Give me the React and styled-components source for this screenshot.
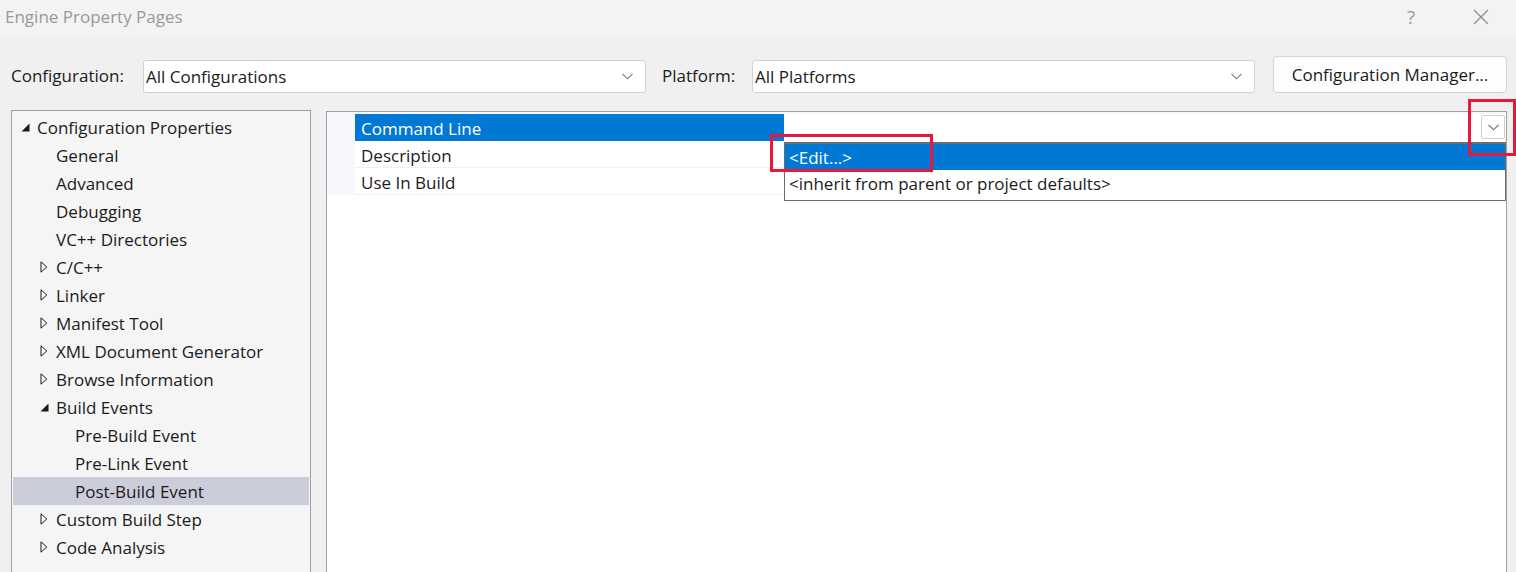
import React from 'react';
import styled, { createGlobalStyle } from 'styled-components';

const Global = createGlobalStyle`
  html, body { margin: 0; padding: 0; }
  body {
    width: 1516px;
    height: 572px;
    overflow: hidden;
    background: #f0f0f0;
    font-family: "Segoe UI", "Open Sans", "Noto Sans", sans-serif;
    font-size: 17px;
    color: #1b1b1b;
  }
`;

const Dialog = styled.div`
  position: relative;
  width: 1516px;
  height: 572px;
  display: flex;
  flex-direction: column;
`;

const TitleBar = styled.div`
  height: 38px;
  display: flex;
  align-items: center;
  background: #f3f3f3;
  padding-left: 5px;
  padding-bottom: 5px;
  box-sizing: border-box;
`;

const Title = styled.div`
  flex: 1;
  color: #999;
  font-size: 17px;
`;

const TitleButton = styled.div`
  width: 70px;
  display: flex;
  justify-content: center;
  color: #9a9a9a;
  font-size: 19px;
`;

const Toolbar = styled.div`
  display: flex;
  align-items: center;
  height: 37px;
  margin-top: 18px;
  padding-left: 11px;
`;

const Label = styled.span`
  width: ${p => p.w}px;
  flex-shrink: 0;
  padding-top: 2px;
`;

const Select = styled.div`
  width: ${p => p.w}px;
  height: 33px;
  margin-top: 3px;
  box-sizing: border-box;
  background: #fff;
  border: 1px solid #d2d2d2;
  border-radius: 3px;
  display: flex;
  align-items: center;
  padding: 0 12px 0 2px;
  margin-right: ${p => p.mr}px;
  span { flex: 1; }
`;

const Button = styled.div`
  width: 234px;
  height: 37px;
  box-sizing: border-box;
  background: #fdfdfd;
  border: 1px solid #d4d4d4;
  border-radius: 4px;
  display: flex;
  align-items: center;
  justify-content: center;
`;

const Main = styled.div`
  flex: 1;
  display: flex;
  gap: 15px;
  padding: 17px 9px 0 11px;
  min-height: 0;
`;

const Tree = styled.div`
  width: 300px;
  flex-shrink: 0;
  box-sizing: border-box;
  border: 1px solid #a0a0a0;
  border-bottom: none;
  background: #f5f5f5;
  padding: 2px 1px 0;
`;

const TreeRow = styled.div`
  height: 28px;
  display: flex;
  align-items: center;
  padding-left: ${p => 5 + p.level * 19}px;
  background: ${p => (p.selected ? '#cbcdda' : 'transparent')};
`;

const Glyph = styled.span`
  width: 19px;
  flex-shrink: 0;
  display: flex;
  align-items: center;
  padding-left: ${p => (p.open ? 3 : 3)}px;
  box-sizing: border-box;
`;

const Grid = styled.div`
  position: relative;
  flex: 1;
  margin-top: 1px;
  box-sizing: border-box;
  border: 1px solid #a0a0a0;
  border-bottom: none;
  background: #fff;
`;

const PropTable = styled.div`
  padding-top: 2px;
  background: #f6f8fb;
  padding-left: 28px;
`;

const PropRow = styled.div`
  display: flex;
  height: 27px;
  box-sizing: border-box;
`;

const PropName = styled.div`
  width: 429px;
  flex-shrink: 0;
  display: flex;
  align-items: center;
  padding: 2px 0 0 6px;
  box-sizing: border-box;
  background: ${p => (p.active ? '#0078d4' : '#fff')};
  color: ${p => (p.active ? '#fff' : '#1b1b1b')};
  border-bottom: 1px solid ${p => (p.active ? '#0078d4' : '#eef0f4')};
`;

const PropValue = styled.div`
  flex: 1;
  display: flex;
  align-items: center;
  justify-content: flex-end;
  background: #fff;
  border-bottom: 1px solid ${p => (p.active ? '#fff' : '#eef0f4')};
  padding-right: 1px;
`;

const DropButton = styled.div`
  width: 24px;
  height: 24px;
  box-sizing: border-box;
  border: 1px solid #d0d0d0;
  border-radius: 2px;
  background: #fff;
  display: flex;
  align-items: center;
  justify-content: center;
`;

const DropList = styled.div`
  position: absolute;
  left: 457px;
  top: 30px;
  right: 0;
  box-sizing: border-box;
  border: 1px solid #6b6b6b;
  background: #fff;
  padding-bottom: 3px;
`;

const DropItem = styled.div`
  height: 27px;
  box-sizing: border-box;
  display: flex;
  align-items: center;
  padding-left: 4px;
  background: ${p => (p.active ? '#0078d4' : '#fff')};
  color: ${p => (p.active ? '#fff' : '#1b1b1b')};
  border-top: ${p => (p.active ? '1px dotted #c07020' : 'none')};
`;

const Callout = styled.div`
  position: absolute;
  box-sizing: border-box;
  border: 3px solid #e8173c;
  left: ${p => p.x}px;
  top: ${p => p.y}px;
  width: ${p => p.w}px;
  height: ${p => p.h}px;
  pointer-events: none;
`;

const Chevron = ({ color = '#7a7a7a' }) => (
  <svg width="11" height="7" viewBox="0 0 11 7">
    <path d="M0.5 0.8 L5.5 5.8 L10.5 0.8" fill="none" stroke={color} strokeWidth="1.1" />
  </svg>
);

const Expanded = () => (
  <svg width="9" height="9" viewBox="0 0 9 9">
    <path d="M8.5 0.5 L8.5 8.5 L0.5 8.5 Z" fill="#1b1b1b" />
  </svg>
);

const Collapsed = () => (
  <svg width="8" height="12" viewBox="0 0 8 12">
    <path d="M1 0.8 L6.8 6 L1 11.2 Z" fill="none" stroke="#1b1b1b" strokeWidth="1" />
  </svg>
);

const tree = [
  { level: 0, label: 'Configuration Properties', state: 'open' },
  { level: 1, label: 'General' },
  { level: 1, label: 'Advanced' },
  { level: 1, label: 'Debugging' },
  { level: 1, label: 'VC++ Directories' },
  { level: 1, label: 'C/C++', state: 'closed' },
  { level: 1, label: 'Linker', state: 'closed' },
  { level: 1, label: 'Manifest Tool', state: 'closed' },
  { level: 1, label: 'XML Document Generator', state: 'closed' },
  { level: 1, label: 'Browse Information', state: 'closed' },
  { level: 1, label: 'Build Events', state: 'open' },
  { level: 2, label: 'Pre-Build Event' },
  { level: 2, label: 'Pre-Link Event' },
  { level: 2, label: 'Post-Build Event', selected: true },
  { level: 1, label: 'Custom Build Step', state: 'closed' },
  { level: 1, label: 'Code Analysis', state: 'closed' },
];

export default function App() {
  return (
    <>
      <Global />
      <Dialog>
        <TitleBar>
          <Title>Engine Property Pages</Title>
          <TitleButton>?</TitleButton>
          <TitleButton>
            <svg width="16" height="16" viewBox="0 0 16 16">
              <path d="M1 1 L15 15 M15 1 L1 15" stroke="#8a8a8a" strokeWidth="1.2" />
            </svg>
          </TitleButton>
        </TitleBar>

        <Toolbar>
          <Label w={132}>Configuration:</Label>
          <Select w={503} mr={16}>
            <span>All Configurations</span>
            <Chevron />
          </Select>
          <Label w={90}>Platform:</Label>
          <Select w={503} mr={18}>
            <span>All Platforms</span>
            <Chevron />
          </Select>
          <Button>Configuration Manager...</Button>
        </Toolbar>

        <Main>
          <Tree>
            {tree.map(item => (
              <TreeRow key={item.label} level={item.level} selected={item.selected}>
                <Glyph open={item.state === 'open'}>
                  {item.state === 'open' && <Expanded />}
                  {item.state === 'closed' && <Collapsed />}
                </Glyph>
                <span>{item.label}</span>
              </TreeRow>
            ))}
          </Tree>

          <Grid>
            <PropTable>
              <PropRow>
                <PropName active>Command Line</PropName>
                <PropValue active>
                  <DropButton>
                    <Chevron color="#6a6a6a" />
                  </DropButton>
                </PropValue>
              </PropRow>
              <PropRow>
                <PropName>Description</PropName>
                <PropValue />
              </PropRow>
              <PropRow>
                <PropName>Use In Build</PropName>
                <PropValue />
              </PropRow>
            </PropTable>
            <DropList>
              <DropItem active>&lt;Edit...&gt;</DropItem>
              <DropItem>&lt;inherit from parent or project defaults&gt;</DropItem>
            </DropList>
          </Grid>
        </Main>

        <Callout x={770} y={134} w={163} h={38} />
        <Callout x={1468} y={99} w={48} h={57} />
      </Dialog>
    </>
  );
}
